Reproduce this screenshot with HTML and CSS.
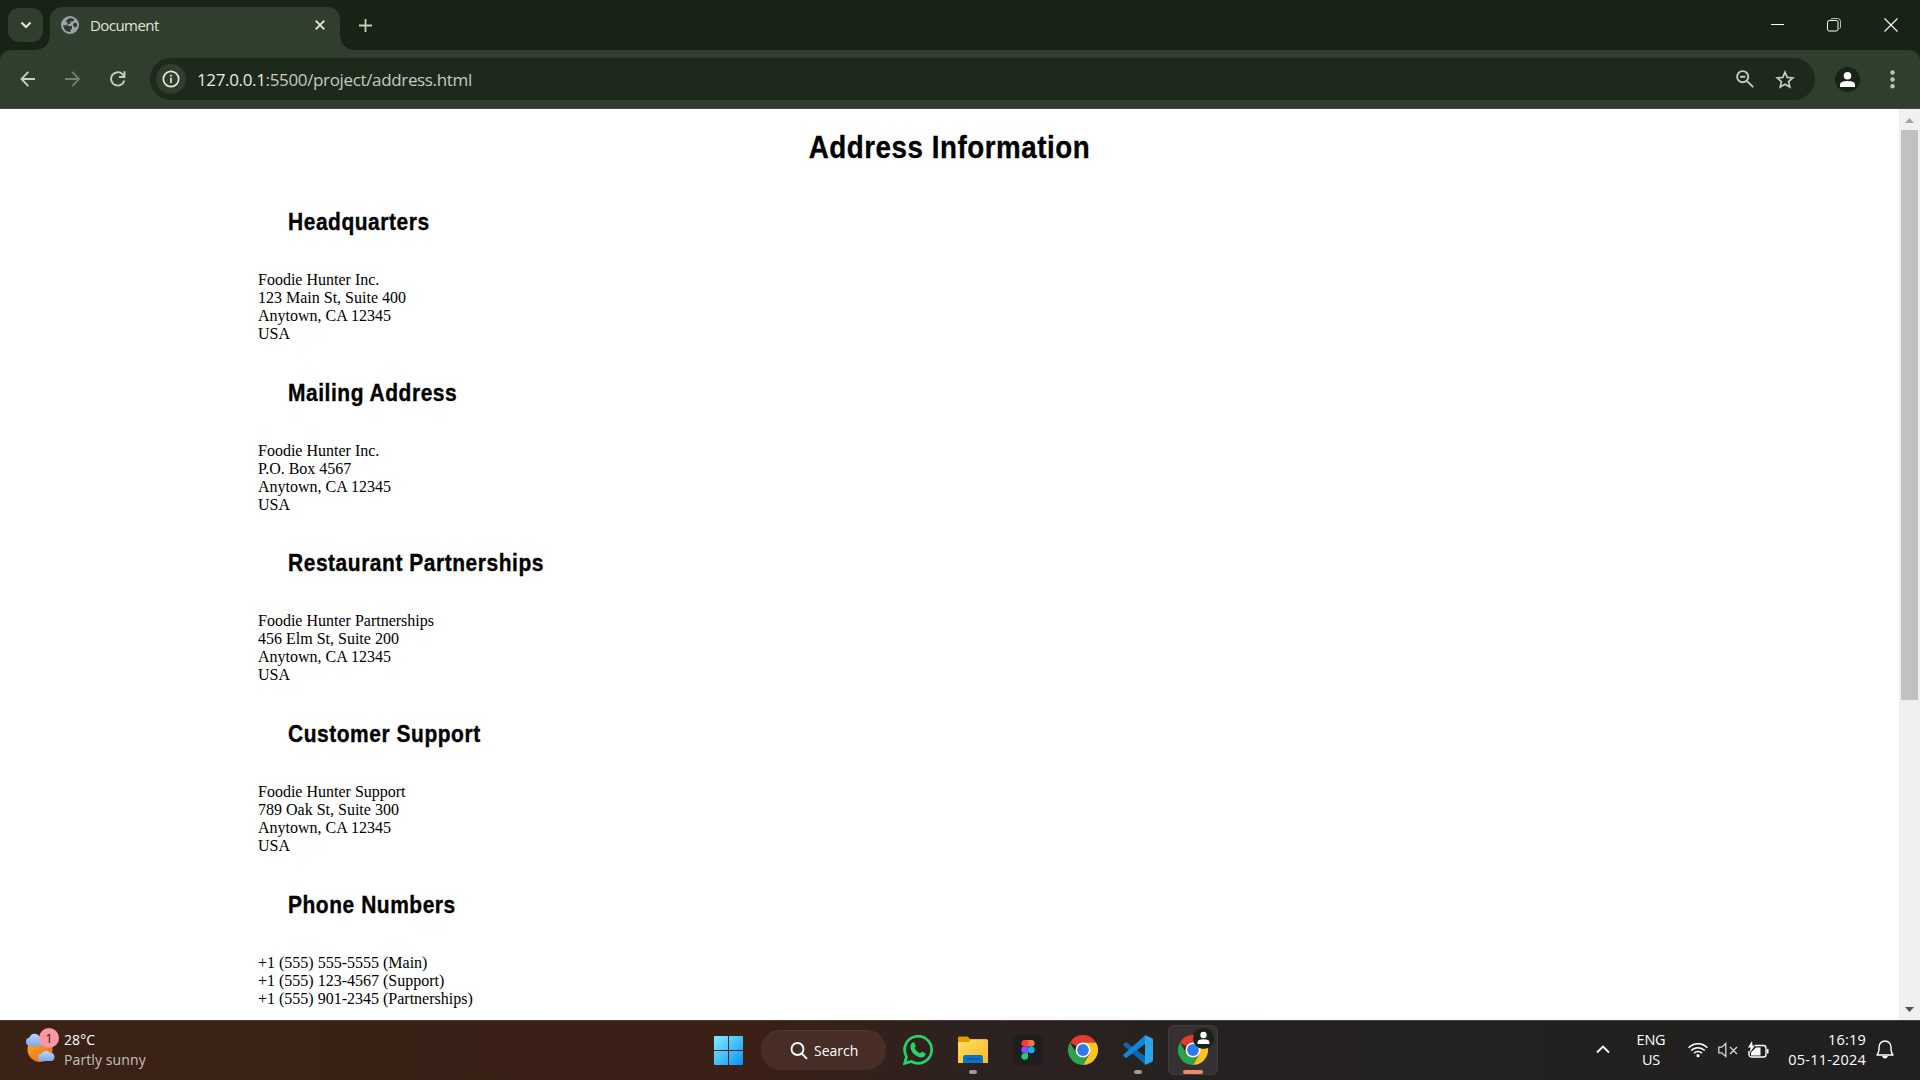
FILE: index.html
```html
<!DOCTYPE html>
<html lang="en">
<head>
<meta charset="utf-8">
<title>Document</title>
<link rel="stylesheet" href="styles.css">
</head>
<body>
<svg width="0" height="0" class="defs">
  <symbol id="chrome" viewBox="0 0 30 30">
    <path fill="#e33b2e" d="M15 15 2 7.500A15 15 0 0 1 28 7.500H15Z"/>
    <path fill="#fcc31e" d="M15 7.500H28A15 15 0 0 1 15 30L21.500 18.750Z"/>
    <path fill="#2da14c" d="M2 7.500 8.500 18.750 15 22.500 21.500 18.750 15 30A15 15 0 0 1 2 7.500Z"/>
    <circle cx="15" cy="15" r="7.500" fill="#fff"/>
    <circle cx="15" cy="15" r="5.900" fill="#2f7bee"/>
  </symbol>
</svg>
<div class="screen">
  <header class="tabs">
    <button class="tab-menu"><svg width="12" height="8" viewBox="0 0 12 8"><path d="M1.500 1.500 6 6l4.500-4.500" fill="none" stroke="#e3e9dc" stroke-width="2.200"/></svg></button>
    <div class="tab">
      <svg width="18" height="18" viewBox="0 0 18 18"><circle cx="9" cy="9" r="9" fill="#9fa2ab"/><path d="M9.500 2Q12 2 13.500 3.500L12 5.500H9.500V7.500L7 8.500V10H11V12.500L9.500 14V16Q5 16 3 12.500L2 9.200H6.500V7L4.800 5Q6.500 2.500 9.500 2Z" fill="#303e2e"/><path d="m12 8 2-1.500 2 1v2.500l-1.200 1.500-2.300-1Z" fill="#303e2e"/></svg>
      <span class="tab-title">Document</span>
      <svg width="10" height="10" viewBox="0 0 10 10"><path d="M.7.7l8.600 8.600M9.300.7.7 9.300" stroke="#e8ecdf" stroke-width="1.800"/></svg>
    </div>
    <svg class="plus" width="13" height="13" viewBox="0 0 13 13"><path d="M6.500 0v13M0 6.500h13" stroke="#c0d4b9" stroke-width="1.800"/></svg>
    <div class="window-buttons">
      <svg width="13" height="14" viewBox="0 0 13 14"><path d="M0 6.500h13" stroke="#fff"/></svg>
      <svg width="14" height="14" viewBox="0 0 14 14" fill="none" stroke="#fff"><path d="M3.500 1.500Q4 .5 5 .5h5.500a3 3 0 0 1 3 3V9q0 1-1 1.500" stroke="#bcc2b9"/><rect x=".5" y="2.500" width="10.500" height="10.500" rx="1.800"/></svg>
      <svg width="14" height="14" viewBox="0 0 14 14"><path d="M.5.5l13 13m0-13-13 13" stroke="#fff" stroke-width="1.100"/></svg>
    </div>
  </header>
  <div class="toolbar-wrap">
  <nav class="toolbar">
    <svg width="16" height="16" viewBox="0 0 16 16" fill="none" stroke="#c0d4b9" stroke-width="1.900"><path d="M15 8H1.500M8.300.9 1.500 8l6.800 7.100"/></svg>
    <svg width="16" height="16" viewBox="0 0 16 16" fill="none" stroke="#70806d" stroke-width="1.900"><path d="M0 8h14M7.200.9 14 8l-6.800 7.100"/></svg>
    <svg width="16" height="16" viewBox="0 0 16 16" fill="none" stroke="#c0d4b9" stroke-width="1.900"><path d="M14.300 9.500A6.700 6.700 0 1 1 12.700 3.300L14.200 5M14.500.3V6H9"/></svg>
    <div class="omnibox">
      <span class="info"><svg width="18" height="18" viewBox="0 0 18 18"><circle cx="9" cy="9" r="7.700" fill="none" stroke="#e3e9dc" stroke-width="1.700"/><path d="M9 7.800V13M9 4.800v1.800" stroke="#e3e9dc" stroke-width="1.700"/></svg></span>
      <span class="url"><b>127.0.0.1</b>:5500/project/address.html</span>
      <svg width="18" height="18" viewBox="0 0 18 18" fill="none" stroke="#c6cbbf" stroke-width="1.900"><circle cx="6.700" cy="6.700" r="5.600"/><path d="m10.800 10.800 6.400 6.400M4 6.700h5.400"/></svg>
      <svg class="star" width="20" height="19" viewBox="0 0 20 19"><path d="m10 2.200 2.200 5.200 5.600.5-4.200 3.700 1.200 5.500-4.800-2.900-4.800 2.900 1.200-5.500-4.200-3.700 5.600-.5Z" fill="none" stroke="#c6cbbf" stroke-width="1.700"/></svg>
    </div>
    <svg class="profile" width="25" height="25" viewBox="0 0 25 25"><circle cx="12.500" cy="12.500" r="12.500" fill="#172314"/><circle cx="12.500" cy="8.700" r="3.800" fill="#fff"/><path d="M5 20v-2.300q0-3.700 7.500-3.700t7.500 3.700V20Z" fill="#fff"/></svg>
    <svg width="5" height="19" viewBox="0 0 5 19" fill="#b7cdb0"><circle cx="2.500" cy="2.500" r="2.200"/><circle cx="2.500" cy="9.500" r="2.200"/><circle cx="2.500" cy="16.300" r="2.200"/></svg>
  </nav>
  </div>
  <div class="viewport">
    <main class="page">
      <h1>Address Information</h1>
      <section><h2>Headquarters</h2><p>Foodie Hunter Inc.<br>123 Main St, Suite 400<br>Anytown, CA 12345<br>USA</p></section>
      <section><h2>Mailing Address</h2><p>Foodie Hunter Inc.<br>P.O. Box 4567<br>Anytown, CA 12345<br>USA</p></section>
      <section><h2>Restaurant Partnerships</h2><p>Foodie Hunter Partnerships<br>456 Elm St, Suite 200<br>Anytown, CA 12345<br>USA</p></section>
      <section><h2>Customer Support</h2><p>Foodie Hunter Support<br>789 Oak St, Suite 300<br>Anytown, CA 12345<br>USA</p></section>
      <section><h2>Phone Numbers</h2><p>+1 (555) 555-5555 (Main)<br>+1 (555) 123-4567 (Support)<br>+1 (555) 901-2345 (Partnerships)</p></section>
    </main>
    <div class="scrollbar">
      <svg width="9" height="5" viewBox="0 0 9 5"><path d="M0 5 4.500 0 9 5Z" fill="#a3a3a3"/></svg>
      <div class="thumb"></div>
      <svg class="down" width="9" height="5" viewBox="0 0 9 5"><path d="M0 0h9L4.500 5Z" fill="#505050"/></svg>
    </div>
  </div>
  <footer class="taskbar">
    <div class="weather">
      <svg width="36" height="36" viewBox="0 0 36 36">
        <defs><linearGradient id="sun" x2=".7" y2="1"><stop stop-color="#f6b52a"/><stop offset="1" stop-color="#ee6c13"/></linearGradient><linearGradient id="cloud" x2="0" y2="1"><stop stop-color="#b9d6fb"/><stop offset="1" stop-color="#81a7ee"/></linearGradient></defs>
        <circle cx="16" cy="20.500" r="12.500" fill="url(#sun)"/>
        <path d="M6 17a4.300 4.300 0 0 1-.5-8.500 5.500 5.500 0 0 1 10-1 5 5 0 0 1 3 9.500Z" fill="url(#cloud)"/>
        <path d="M17.500 32a3.600 3.600 0 0 1 0-7.200 5 5 0 0 1 8.500-1 4.300 4.300 0 0 1 2 8.200Z" fill="url(#cloud)"/>
      </svg>
      <span class="count">1</span>
      <div class="weather-text"><span>28°C</span><span class="dim">Partly sunny</span></div>
    </div>
    <div class="apps">
      <svg class="start" width="29" height="29" viewBox="0 0 29 29"><defs><linearGradient id="win" gradientUnits="userSpaceOnUse" x1="0" y1="0" x2="29" y2="29"><stop stop-color="#7df0ff"/><stop offset="1" stop-color="#0a91f8"/></linearGradient></defs><path d="M1 0h13v14H0V1Q0 0 1 0ZM15 0h13q1 0 1 1v13H15ZM0 15h14v14H1q-1 0-1-1ZM15 15h14v13q0 1-1 1H15Z" fill="url(#win)"/></svg>
      <div class="search"><svg width="18" height="18" viewBox="0 0 18 18" fill="none" stroke="#fff" stroke-width="1.900"><circle cx="7.500" cy="7" r="6"/><path d="m11.700 11.500 5.300 5.300"/></svg><span>Search</span></div>
      <div class="app"><svg width="30" height="30" viewBox="0 0 30 30"><path d="M1.600 28.400 3.500 21.600A13.500 13.500 0 1 1 8.500 26.500Z" fill="none" stroke="#25d366" stroke-width="2.700"/><path d="M9.700 7.600q1.500-.7 2 .7l1 2.500q.2.900-1.300 2.300 1.900 3.700 5.600 5.300 1.400-1.900 2.200-1.700l3.100 1.600q.5.500-.1 2-1.300 3-5.300 2.100Q9.900 20.500 7.700 14.100 6.600 9.300 9.700 7.600Z" fill="#25d366"/></svg></div>
      <div class="app"><svg width="30" height="28" viewBox="0 0 30 28"><defs><linearGradient id="folder" x2="1" y2="1"><stop stop-color="#ffdd67"/><stop offset="1" stop-color="#fdbb1d"/></linearGradient></defs><path d="M0 2q0-1.500 1.500-1.500H9q1.500 0 3 2.500h17v5H0Z" fill="#dca006"/><path d="M0 6h10.500L13 3.500h16q1 0 1 1V27H0Z" fill="url(#folder)"/><path d="M5 27v-5.500q0-2.500 2.500-2.500h15q2.500 0 2.500 2.500V27Z" fill="#0a72c8"/><path d="M8 23h14" stroke="#07519c" stroke-width="1.300"/></svg><i class="mark"></i></div>
      <div class="app"><svg width="30" height="30" viewBox="0 0 30 30"><rect width="30" height="30" rx="2" fill="#1e1e1e"/><path d="M15 5h-3.300a3.300 3.300 0 0 0 0 6.600H15Z" fill="#ff3737"/><path d="M15 5h3.300a3.300 3.300 0 0 1 0 6.600H15Z" fill="#ff7237"/><path d="M15 11.600h-3.300a3.300 3.300 0 0 0 0 6.600H15Z" fill="#874fff"/><circle cx="18.300" cy="14.900" r="3.300" fill="#00b6ff"/><path d="M15 18.200h-3.300a3.300 3.300 0 1 0 3.300 3.300Z" fill="#24cb71"/></svg></div>
      <div class="app"><svg width="30" height="30"><use href="#chrome"/></svg></div>
      <div class="app"><svg width="30" height="30" viewBox="0 0 30 30"><path d="m1 8.500 2-1.600L22.500 21.500V30L.6 10.500Q0 9.500 1 8.500Z" fill="#0b67ae"/><path d="M1 21.500 3 23.200 22.500 8.500V0L.6 19.500q-.6 1 .4 2Z" fill="#1286d3"/><path d="M22 0l7 3.200q1 .6 1 1.800v20q0 1.200-1 1.800L22 30Z" fill="#2ba6ee"/></svg><i class="mark"></i></div>
      <div class="app active"><svg width="30" height="30"><use href="#chrome"/></svg><svg class="user" width="21" height="21" viewBox="0 0 21 21"><circle cx="10.500" cy="10.500" r="10.500" fill="#172314"/><circle cx="10.500" cy="7" r="3.200" fill="#fff"/><path d="M4.500 16v-1.600q0-3.200 6-3.200t6 3.200V16Z" fill="#fff"/></svg><i class="mark"></i></div>
    </div>
    <div class="tray">
      <svg width="14" height="9" viewBox="0 0 14 9"><path d="m1 7.500 6-6 6 6" fill="none" stroke="#fff" stroke-width="1.800"/></svg>
      <div class="lang"><span>ENG</span><span>US</span></div>
      <svg class="wifi" width="20" height="16" viewBox="0 0 20 16" fill="none" stroke="#fff" stroke-width="1.500"><path d="M.6 5.700a13 13 0 0 1 18.800 0M3.200 8.500a9.500 9.500 0 0 1 13.600 0M5.900 11.300a5.800 5.800 0 0 1 8.200 0"/><circle cx="10" cy="13.700" r="1.600" fill="#fff" stroke="none"/></svg>
      <svg class="volume" width="20" height="16" viewBox="0 0 20 16" fill="none" stroke="#d8d8d8" stroke-width="1.300"><path d="M.8 5.200h3l4-3.700v13l-4-3.700h-3ZM12 5l7 7m0-7-7 7"/></svg>
      <svg class="battery" width="21" height="18" viewBox="0 0 21 18"><path d="M7 4.500h8.500q2.500 0 2.500 2.500v6.500q0 2.500-2.500 2.500h-12Q1 16 1 13.500V10" fill="none" stroke="#fff" stroke-width="1.400"/><path d="M19 8h1.500v4.500H19ZM8 6.500h4.500v8H3v-3ZM4 0 0 6.500h2.700L1.500 12 7 4.500H4.500Z" fill="#fff"/></svg>
      <div class="clock"><span>16:19</span><span>05-11-2024</span></div>
      <svg class="bell" width="18" height="19" viewBox="0 0 18 19"><path d="M1 15q1.800-2.500 2-5V7a5.800 5.800 0 0 1 12 0v3q.2 2.500 2 5Z" fill="none" stroke="#fff" stroke-width="1.400" stroke-linejoin="round"/><path d="M6 16h6q-.7 2.500-3 2.500T6 16Z" fill="#fff"/></svg>
    </div>
  </footer>
</div>
</body>
</html>
```
FILE: styles.css
```css
* { box-sizing: border-box; }
body { margin: 0; overflow: hidden; }
svg { display: block; flex: none; }
.defs { position: absolute; }
.screen {
  width: 1920px; height: 1080px;
  display: grid; grid-template: 50px 59px 911px 60px / 1920px;
  font-family: "Open Sans", "Noto Sans", sans-serif;
}

/* Tab strip */
.tabs { background: #172314; display: flex; align-items: flex-start; padding: 7px 22px 0 8px; }
.tab-menu {
  width: 35px; height: 34px; margin: 1px 7px 0 0; padding: 0;
  border: 0; border-radius: 11px; background: #303e2e;
  display: grid; place-items: center;
}
.tab {
  position: relative; width: 290px; height: 43px; padding: 0 15px 7px 11px;
  background: #303e2e; border-radius: 12px 12px 0 0;
  display: flex; align-items: center;
}
.tab::before, .tab::after { content: ""; position: absolute; bottom: 0; width: 14px; height: 14px; }
.tab::before { left: -14px; background: radial-gradient(circle at 0 0, transparent 13.500px, #303e2e 14px); }
.tab::after { right: -14px; background: radial-gradient(circle at 100% 0, transparent 13.500px, #303e2e 14px); }
.tab-title { flex: 1; margin-left: 11px; font-size: 15px; letter-spacing: -.55px; color: #e0e5d9; }
.plus { margin: 12px 0 0 19px; }
.window-buttons { margin: 11px 0 0 auto; display: flex; gap: 43px; }

/* Toolbar */
.toolbar-wrap { background: #172314; }
.toolbar {
  height: 59px; background: #303e2e; border-bottom: 1px solid #424d40; border-radius: 10px 10px 0 0;
  display: flex; align-items: center; padding: 0 25px 0 20px;
}
.toolbar > svg:nth-child(2), .toolbar > svg:nth-child(3) { margin-left: 29px; }
.omnibox {
  width: 1665px; height: 42px; margin-left: 24px; padding: 0 20px 0 6px;
  border-radius: 21px; background: #1d291b;
  display: flex; align-items: center;
}
.info { width: 30px; height: 30px; border-radius: 50%; background: #303e2e; display: grid; place-items: center; }
.url { flex: 1; margin-left: 11px; font-size: 17px; letter-spacing: -.35px; color: #c6cbbf; }
.url b { font-weight: 400; color: #e6ebe0; }
.star { margin-left: 21px; }
.profile { margin: 0 30px 0 20px; }

/* Web page */
.viewport { background: #fff; display: flex; overflow: hidden; }
.page { flex: 1; color: #000; font: 16px/18px "Liberation Serif", "Times New Roman", serif; }
h1, h2 { font-family: "Franklin Gothic Medium", "Liberation Sans", Arial, sans-serif; font-weight: 700; -webkit-text-stroke: .35px #000; }
h1 { margin: 20px 0 1px; text-align: center; font-size: 31px; line-height: 38px; letter-spacing: .6px; transform: scaleX(.895); }
section { height: 170.700px; padding-left: 258px; }
h2 { margin: 0; padding: 40px 0 0 30px; font-size: 23px; line-height: 28px; letter-spacing: .6px; transform: scaleX(.911); transform-origin: 30px 0; }
h1 + section { margin-top: -.1px; }
p { margin: 35px 0 0; }
.scrollbar { width: 21px; background: #f0f0f0; display: flex; flex-direction: column; align-items: center; padding: 9px 0 8px; }
.thumb { width: 17px; height: 570px; margin-top: 7px; background: #c1c1c1; }
.down { margin-top: auto; }

/* Taskbar */
.taskbar {
  border-top: 1px solid #4a403a; color: #fff;
  background: linear-gradient(90deg, #3a2217 0, #3a2016 760px, #2c2220 980px, #252121 1240px, #222120 1600px, #202020 100%);
  display: grid; grid-template-columns: 714px 504px 702px; font-size: 14px;
}
.weather { position: relative; display: flex; padding: 8px 0 0 24px; }
.count {
  position: absolute; left: 39px; top: 7px; width: 20px; height: 20px; border-radius: 50%;
  background: #ff96a0; color: #222; font-size: 13px; line-height: 20px; text-align: center;
}
.weather-text { display: flex; flex-direction: column; margin-left: 4px; line-height: 20px; padding-top: 1px; letter-spacing: .1px; }
.dim { color: #c9c0bc; }
.apps { display: flex; align-items: center; padding-bottom: 1px; }
.search {
  width: 125px; height: 40px; margin: 0 4.500px 0 18px; padding-left: 29px; border-radius: 20px;
  background: #472d25; border-top: 1px solid #553b32;
  display: flex; align-items: center; gap: 6px; letter-spacing: 0;
}
.search span { padding-bottom: 1px; }
.app { position: relative; width: 55px; height: 50px; flex: none; display: grid; place-items: center; }
.active { width: 50px; margin-left: 2.500px; border: 1px solid #423d3d; border-radius: 6px; background: #353031; }
.mark { position: absolute; bottom: 1px; width: 8px; height: 4px; border-radius: 2px; background: #9c9a9a; }
.active .mark { bottom: 0; width: 20px; background: #f4866c; }
.user { position: absolute; right: 3px; top: 2px; }
.tray { display: flex; align-items: center; padding: 0 26px 2px 378px; line-height: 20px; font-size: 14.500px; }
.tray div { display: flex; flex-direction: column; letter-spacing: -.2px; }
.lang { align-items: center; width: 40px; margin-left: 21px; }
.wifi { margin-left: 17px; }
.volume { margin-left: 10px; }
.battery { margin-left: 10px; }
.tray .clock { align-items: flex-end; width: 85px; margin-left: 12px; letter-spacing: .2px; }
.bell { margin-left: 10px; }
```
